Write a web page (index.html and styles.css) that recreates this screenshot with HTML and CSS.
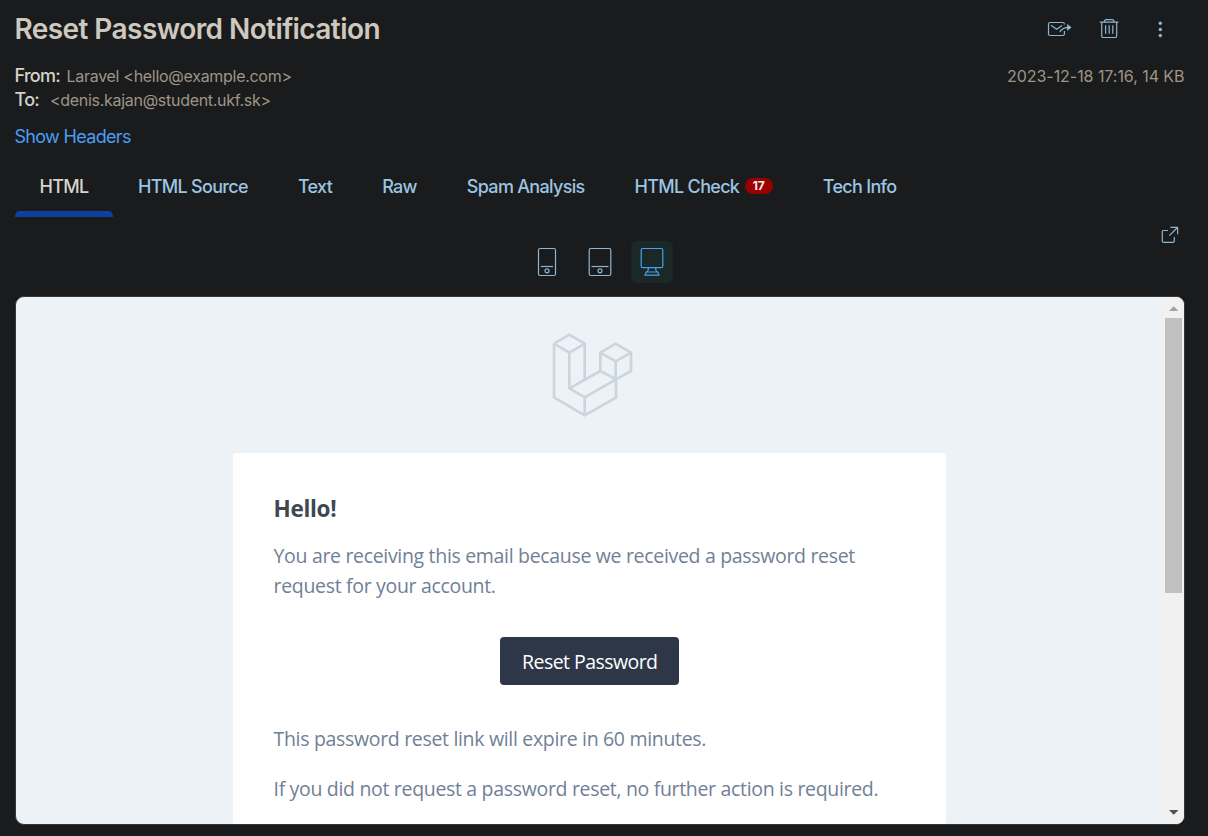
FILE: index.html
```html
<!DOCTYPE html>
<html lang="en">
<head>
<meta charset="utf-8">
<title>Reset Password Notification</title>
<link rel="stylesheet" href="styles.css">
</head>
<body>
<div class="app">
  <header class="header">
    <h1 class="title">Reset Password Notification</h1>
    <div class="actions">
      <svg class="icon" width="26" height="22" viewBox="0 0 26 22"><path d="M18.400 6.500V6a1.600 1.600 0 0 0-1.600-1.500H4.100A1.600 1.600 0 0 0 2.500 6v10a1.600 1.600 0 0 0 1.600 1.500h12.700a1.600 1.600 0 0 0 1.600-1.500v-3M5 7.300l5.700 4L16 7.500M13.800 14c1.500-3 4-4.700 9.500-4.700"/><path class="solid" d="M21.300 6.300l4 3.100-4 3z"/></svg>
      <svg class="icon icon-trash" width="20" height="22" viewBox="0 0 20 22"><path d="M.8 4.200h18.600M5 4l1-1.800.8-.5h6.800l.8.500 1 1.800M2.700 4.500v13.400a1.600 1.600 0 0 0 1.600 1.600h11.800a1.600 1.600 0 0 0 1.600-1.600V4.500M6.600 7.300v8.500M10.200 7.300v8.500M13.800 7.300v8.500"/></svg>
      <svg class="icon" width="6" height="22" viewBox="0 0 6 22"><g class="solid"><circle cx="3.300" cy="5.200" r="1.500"/><circle cx="3.300" cy="11.400" r="1.500"/><circle cx="3.300" cy="17.600" r="1.500"/></g></svg>
    </div>
  </header>
  <section class="meta">
    <div>
      <div class="meta-row"><b class="label label-from">From:</b><span>Laravel &lt;hello@example.com&gt;</span></div>
      <div class="meta-row"><b class="label label-to">To:</b><span>&lt;denis.kajan@student.ukf.sk&gt;</span></div>
    </div>
    <div class="date">2023-12-18 17:16, 14 KB</div>
  </section>
  <a class="show-headers">Show Headers</a>
  <nav class="tabs">
    <a class="tab tab-active">HTML</a>
    <a class="tab">HTML Source</a>
    <a class="tab">Text</a>
    <a class="tab">Raw</a>
    <a class="tab">Spam Analysis</a>
    <a class="tab">HTML Check<span class="badge">17</span></a>
    <a class="tab">Tech Info</a>
  </nav>
  <div class="toolbar">
    <div class="devices">
      <span class="device"><svg class="icon" width="20" height="30" viewBox="0 0 20 30"><rect x="1.500" y="1.500" width="17" height="27" rx="1.500"/><path d="M4 19.500h12"/><circle cx="10" cy="23.800" r="2"/></svg></span>
      <span class="device"><svg class="icon" width="24" height="30" viewBox="0 0 24 30"><rect x="1.200" y="1.500" width="21.600" height="27" rx="1.500"/><path d="M3.500 19.500h17"/><circle cx="12" cy="23.800" r="2"/></svg></span>
      <span class="device device-active"><svg class="icon" width="24" height="30" viewBox="0 0 24 30"><rect x="1.200" y="1.500" width="21.600" height="19.200" rx="1.500"/><path d="M8.500 20.700c0 2-.5 3.300-1.500 4.300M15.500 20.700c0 2 .5 3.300 1.500 4.300M6.200 25h11.600l1.200 3.200H5z"/></svg></span>
    </div>
    <svg class="icon external" width="20" height="20" viewBox="0 0 20 20"><path d="M8 5.500H3.500a1.200 1.200 0 0 0-1.200 1.200v9.400a1.200 1.200 0 0 0 1.200 1.200h9.600a1.200 1.200 0 0 0 1.200-1.200V12M9.300 10.700l8.200-8.200M10.300 2.300h7.300v7"/></svg>
  </div>
  <main class="frame">
    <div class="mail">
      <svg class="logo" width="84" height="86" viewBox="0 0 252 258"><path d="M6 38L52 11l46 27v107M6 38l46 27 46-27M6 38v161l92 54 94-53v-55M52 65v107l46 27v54M52 172l93-52M98 199l94-54M145 120V65l46-27 46 27v55l-45 25-47-25M145 65l46 26 46-26M191 91v54"/></svg>
      <article class="card">
        <h2 class="hello">Hello!</h2>
        <p class="text">You are receiving this email because we received a password reset<br>request for your account.</p>
        <a class="button">Reset Password</a>
        <p class="text">This password reset link will expire in 60 minutes.</p>
        <p class="text">If you did not request a password reset, no further action is required.</p>
      </article>
    </div>
    <div class="scrollbar">
      <svg width="17" height="21" viewBox="0 0 17 21"><path fill="#a3a3a3" d="M4 14h9.500L8.700 9.200z"/></svg>
      <div class="thumb"></div>
      <svg class="down" width="17" height="21" viewBox="0 0 17 21"><path fill="#505050" d="M4 7h9.500l-4.800 4.800z"/></svg>
    </div>
  </main>
</div>
</body>
</html>
```
FILE: styles.css
```css
* { box-sizing: border-box; }
body { margin: 0; background: #1a1b1c; font-family: Inter, "Liberation Sans", sans-serif; color: #9f9586; }
.app { height: 836px; padding: 0 24px 11px 15px; display: flex; flex-direction: column; overflow: hidden; }
.header { height: 58px; display: flex; justify-content: space-between; align-items: center; }
.title { margin: 0 0 0 -0.5px; font-size: 28px; line-height: 40px; font-weight: 600; letter-spacing: -0.58px; color: #cec8bf; white-space: nowrap; }
.actions { display: flex; align-items: center; padding-right: 21px; gap: 38px; }
.icon-trash { margin-left: -11px; }
.icon { fill: none; stroke: #8db6d2; stroke-width: 1.2; display: block; }
.solid { fill: #93bfdd; stroke-width: .4; }
.meta { display: flex; justify-content: space-between; padding-top: 6px; height: 60px; }
.meta-row { display: flex; align-items: center; height: 24px; font-size: 16px; letter-spacing: -0.29px; white-space: nowrap; }
.label { font-weight: 500; font-size: 18px; line-height: 24px; letter-spacing: -0.7px; color: #d6d1c9; margin-left: -0.5px; }
.label-from { width: 52px; }
.label-to { width: 35.5px; }
.date { font-size: 16px; line-height: 24px; letter-spacing: -0.05px; margin-right: -0.5px; }
.show-headers { font-size: 18px; line-height: 24px; height: 36px; padding-top: 7px; color: #4a9df5; letter-spacing: -0.68px; margin: 0 0 7px -0.5px; }
.tabs { display: flex; height: 56px; }
.tab { display: flex; align-items: center; padding: 0 25px 6px; font-size: 18px; letter-spacing: -0.69px; color: #9cc5e3; white-space: nowrap; font-weight: 500; }
.tab-active { width: 98px; padding-left: 24.5px; color: #d8d4cd; position: relative; }
.tab-active::after { content: ""; position: absolute; left: 0; right: 0; bottom: 0; height: 6px; border-radius: 5px 5px 0 0; background: #10409f; }
.badge { margin-left: 5.500px; width: 28px; height: 16px; line-height: 16px; border-radius: 8px; background: #9b0000; color: #f2efeb; font-size: 12px; font-weight: 700; text-align: center; letter-spacing: -0.2px; }
.toolbar { display: flex; height: 79px; justify-content: flex-end; padding: 8px 4px 0 0; }
.devices { display: flex; gap: 10.500px; padding-top: 16px; margin-right: 487px; }
.device { width: 42px; height: 42px; border-radius: 6px; display: flex; align-items: center; justify-content: center; }
.device-active { background: #1b2828; }
.device-active .icon { stroke: #4a9fee; }
.frame { flex: 1; border: 1px solid #34383b; border-radius: 9px; display: flex; overflow: hidden; background: #edf2f7; margin-right: -1px; }
.mail { flex: 1; display: flex; flex-direction: column; align-items: center; }
.logo { margin: 34px 0 0 10px; fill: none; stroke: #cbd5e0; stroke-width: 8; flex: none; stroke-linejoin: round; }
.card { width: 713px; flex: 1; margin: 36px 0 0 1px; background: #fff; border-radius: 2px; padding: 40px 40px 0 40.500px; display: flex; flex-direction: column; font-family: "Open Sans", "Noto Sans", sans-serif; }
.hello { margin: 0 0 16px; font-size: 22.5px; line-height: 32px; letter-spacing: -0.3px; color: #3d4852; }
.text { margin: 0 0 20px; font-size: 19.5px; line-height: 30px; letter-spacing: -0.32px; color: #718096; white-space: nowrap; }
.button { align-self: center; width: 179px; height: 48px; margin: 16px 0 39px; border-radius: 4px; background: #2d3748; color: #fff; font-size: 19.5px; line-height: 50px; letter-spacing: -0.55px; text-align: center; white-space: nowrap; }
.scrollbar { width: 22px; background: #f1f1f1; padding-left: 3px; display: flex; flex-direction: column; }
.thumb { width: 17px; height: 275px; background: #c1c1c1; }
.down { margin-top: auto; }
```
